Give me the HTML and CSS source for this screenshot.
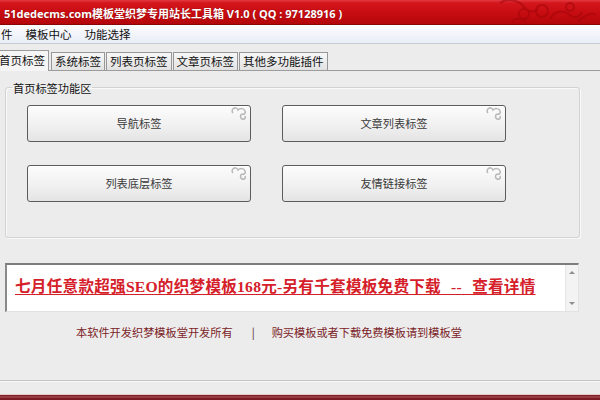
FILE: index.html
```html
<!DOCTYPE html>
<html lang="zh-CN">
<head>
<meta charset="utf-8">
<title>51dedecms.com模板堂织梦专用站长工具箱</title>
<link rel="stylesheet" href="styles.css">
</head>
<body>
<div class="window">
  <div class="titlebar">
    <span class="title">51dedecms.com模板堂织梦专用站长工具箱 V1.0 ( QQ : 97128916 )</span>
    <svg class="title-deco" width="110" height="25" viewBox="0 0 110 25" aria-hidden="true">
      <g fill="none" stroke="#a0060a" stroke-width="2" opacity="0.55">
        <path d="M10 4 c8 -6 20 -2 24 4 c3 5 10 6 14 2"/>
        <circle cx="34" cy="15" r="5"/>
        <circle cx="52" cy="12" r="6"/>
        <path d="M60 20 c4 -8 14 -10 20 -4 c4 4 10 2 12 -3"/>
        <circle cx="80" cy="8" r="4"/>
        <path d="M88 22 c6 -4 12 -10 18 -6"/>
        <path d="M22 22 c4 -3 10 -3 14 1"/>
      </g>
    </svg>
  </div>
  <div class="menubar">
    <span class="menu-item first">件</span>
    <span class="menu-item">模板中心</span>
    <span class="menu-item">功能选择</span>
  </div>
  <div class="tabs">
    <span class="tab active">首页标签</span>
    <span class="tab">系统标签</span>
    <span class="tab">列表页标签</span>
    <span class="tab">文章页标签</span>
    <span class="tab">其他多功能插件</span>
  </div>
  <div class="panel">
    <fieldset class="group">
      <legend>首页标签功能区</legend>
      <div class="btn-grid">
        <button class="btn">导航标签<svg class="swirl" width="18" height="14" viewBox="0 0 18 14" aria-hidden="true"><path d="M2 6 a3 3 0 1 1 5 -3 c2 -2 6 -2 7 1 c1 2 -1 4 -3 3 M11 7 c-2 1 -2 4 0 5 c2 1 4 -1 3 -3" fill="none" stroke="#b8b8b8" stroke-width="1.5"/></svg></button>
        <button class="btn">文章列表标签<svg class="swirl" width="18" height="14" viewBox="0 0 18 14" aria-hidden="true"><path d="M2 6 a3 3 0 1 1 5 -3 c2 -2 6 -2 7 1 c1 2 -1 4 -3 3 M11 7 c-2 1 -2 4 0 5 c2 1 4 -1 3 -3" fill="none" stroke="#b8b8b8" stroke-width="1.5"/></svg></button>
        <button class="btn">列表底层标签<svg class="swirl" width="18" height="14" viewBox="0 0 18 14" aria-hidden="true"><path d="M2 6 a3 3 0 1 1 5 -3 c2 -2 6 -2 7 1 c1 2 -1 4 -3 3 M11 7 c-2 1 -2 4 0 5 c2 1 4 -1 3 -3" fill="none" stroke="#b8b8b8" stroke-width="1.5"/></svg></button>
        <button class="btn">友情链接标签<svg class="swirl" width="18" height="14" viewBox="0 0 18 14" aria-hidden="true"><path d="M2 6 a3 3 0 1 1 5 -3 c2 -2 6 -2 7 1 c1 2 -1 4 -3 3 M11 7 c-2 1 -2 4 0 5 c2 1 4 -1 3 -3" fill="none" stroke="#b8b8b8" stroke-width="1.5"/></svg></button>
      </div>
    </fieldset>
  </div>
  <div class="marquee">
    <div class="marquee-text"><a href="#" class="promo">七月任意款超强SEO的织梦模板168元-另有千套模板免费下载 -- 查看详情</a></div>
    <div class="scrollbar"><span class="arrow up"></span><span class="arrow down"></span></div>
  </div>
  <div class="footer">
    <span>本软件开发织梦模板堂开发所有</span>
    <span class="sep">|</span>
    <span>购买模板或者下载免费模板请到模板堂</span>
  </div>
  <div class="divider"></div>
  <div class="bottom-band"></div>
</div>
</body>
</html>
```

FILE: styles.css
```css
html, body {
  margin: 0;
  padding: 0;
}
body {
  width: 600px;
  height: 400px;
  overflow: hidden;
  background: #ececec;
  font-family: "Noto Sans CJK SC", "Noto Sans", sans-serif;
  color: #222;
}
.window {
  width: 600px;
  height: 400px;
  overflow: hidden;
  display: flex;
  flex-direction: column;
}
.titlebar {
  height: 24px;
  display: flex;
  align-items: center;
  background: linear-gradient(#e23a40 0, #d3161c 3px, #c70c11 55%, #b3070b 100%);
  border-bottom: 1px solid #8a0508;
  overflow: hidden;
}
.title {
  padding-left: 4px;
  padding-top: 2px;
  color: #fff;
  font-family: "Noto Sans", "Noto Sans CJK SC", sans-serif;
  font-weight: bold;
  font-size: 11px;
  white-space: nowrap;
  text-shadow: 0 0 1px #7a0000;
}
.title-deco {
  margin-left: auto;
  flex: none;
}
.menubar {
  height: 18px;
  display: flex;
  align-items: center;
  gap: 9px;
  background: linear-gradient(#fbfcfe, #e9edf5);
  border-bottom: 1px solid #c6cbd6;
  font-size: 11.5px;
  color: #111;
}
.menu-item {
  padding: 0 2px;
  line-height: 18px;
}
.menu-item.first {
  margin-left: -1px;
  margin-right: 0;
}
.tabs {
  margin-top: 6px;
  height: 20px;
  display: flex;
  align-items: flex-end;
  border-bottom: 1px solid #9c9c9c;
  font-size: 11.5px;
}
.tab {
  height: 17px;
  line-height: 17px;
  padding: 0 3px;
  margin-right: 1px;
  border: 1px solid #979797;
  border-bottom: none;
  background: linear-gradient(#f7f7f7, #e2e2e2);
  color: #111;
  white-space: nowrap;
}
.tab.active {
  height: 20px;
  line-height: 19px;
  margin-left: -5px;
  margin-right: 2px;
  margin-bottom: -1px;
  background: #f5f5f5;
  border-color: #9a9a9a;
}
.panel {
  padding-top: 10px;
}
.group {
  margin: 0 20px 0 5px;
  padding: 10px 0 35px 21px;
  border: 1px solid #d2d2d2;
  border-radius: 3px;
  box-shadow: 1px 1px 0 #fafafa, inset 1px 1px 0 #fafafa;
  min-width: 0;
}
.group legend {
  margin-left: -15px;
  padding: 0 1px;
  font-size: 11.2px;
  line-height: 14px;
  color: #111;
}
.btn-grid {
  display: grid;
  grid-template-columns: 224px 224px;
  grid-auto-rows: 37px;
  column-gap: 31px;
  row-gap: 23px;
}
.btn {
  position: relative;
  margin: 0;
  padding: 0;
  border: 1px solid #5c5c5c;
  border-radius: 3px;
  background: linear-gradient(#fcfcfc 0, #f2f2f2 50%, #e4e4e4 100%);
  box-shadow: inset 0 1px 0 #fff;
  font-family: "Noto Sans CJK SC", sans-serif;
  font-size: 11.2px;
  color: #3a3a3a;
  cursor: pointer;
}
.swirl {
  position: absolute;
  top: 1px;
  right: 1px;
}
.marquee {
  margin: 25px 21px 0 5px;
  height: 50px;
  box-sizing: border-box;
  display: flex;
  background: #fff;
  border-top: 2px solid #7c7c7c;
  border-left: 2px solid #8a8a8a;
  border-right: 1px solid #e2e2e2;
  border-bottom: 1px solid #e2e2e2;
}
.marquee-text {
  flex: 1;
  padding: 8px 0 0 8px;
  white-space: nowrap;
  overflow: hidden;
}
.promo {
  color: #d5202a;
  font-family: "Liberation Serif", "Noto Sans CJK SC", serif;
  font-weight: bold;
  font-size: 15.6px;
  line-height: 20px;
  letter-spacing: 0.25px;
  word-spacing: 6px;
  text-decoration: underline;
  text-underline-offset: 2px;
}
.scrollbar {
  width: 13px;
  flex: none;
  background: #f3f3f3;
  border-left: 1px solid #e6e6e6;
  display: flex;
  flex-direction: column;
  justify-content: space-between;
  align-items: center;
  padding: 6px 0 6px;
  box-sizing: border-box;
}
.arrow {
  width: 0;
  height: 0;
  border-left: 3px solid transparent;
  border-right: 3px solid transparent;
}
.arrow.up {
  border-bottom: 3px solid #8e8e8e;
}
.arrow.down {
  border-top: 3px solid #8e8e8e;
}
.footer {
  margin-top: 12px;
  padding-left: 76px;
  display: flex;
  font-size: 11.2px;
  line-height: 16px;
  color: #7b2327;
  white-space: nowrap;
}
.footer .sep {
  margin: 0 17px 0 19px;
  color: #5a2a2a;
}
.divider {
  margin-top: 40px;
  height: 1px;
  background: #c4c4c4;
  border-bottom: 1px solid #f7f7f7;
}
.bottom-band {
  margin-top: 12px;
  height: 5px;
  border-top: 1px solid #ecc9cb;
  background: linear-gradient(#7e1f26 0, #7e1f26 1px, #b45a62 2px, #7a1c22 3px, #7a1c22 100%);
}
```
